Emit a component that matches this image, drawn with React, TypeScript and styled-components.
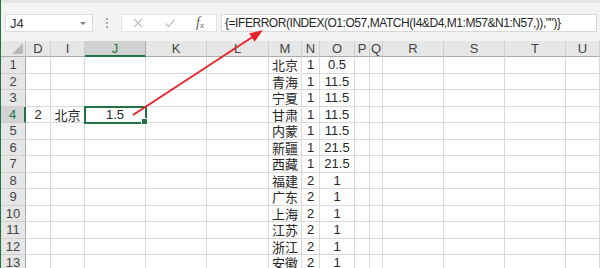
import * as React from "react"
import styled, { createGlobalStyle } from "styled-components"

const GlobalStyle = createGlobalStyle`
  html, body {
    margin: 0;
    padding: 0;
    background: #ffffff;
  }
  body {
    font-family: "Liberation Sans", "Noto Sans CJK SC", sans-serif;
  }
`

const GREEN = "#217346"
const COLUMNS = ["D", "I", "J", "K", "L", "M", "N", "O", "P", "Q", "R", "S", "T", "U"]

type Row = { no: number; cells: Record<string, string> }

const regions: [string, string, string][] = [
  ["北京", "1", "0.5"],
  ["青海", "1", "11.5"],
  ["宁夏", "1", "11.5"],
  ["甘肃", "1", "11.5"],
  ["内蒙", "1", "11.5"],
  ["新疆", "1", "21.5"],
  ["西藏", "1", "21.5"],
  ["福建", "2", "1"],
  ["广东", "2", "1"],
  ["上海", "2", "1"],
  ["江苏", "2", "1"],
  ["浙江", "2", "1"],
  ["安徽", "2", "1"],
]

const rows: Row[] = regions.map(([m, n, o], i) => ({
  no: i + 1,
  cells: i === 3 ? { D: "2", I: "北京", J: "1.5", M: m, N: n, O: o } : { M: m, N: n, O: o },
}))

const ACTIVE_COL = "J"
const ACTIVE_ROW = 4

export default function App() {
  return (
    <Page>
      <GlobalStyle />
      <FormulaBar>
        <NameBox>
          <span>J4</span>
          <Caret />
        </NameBox>
        <Grip>
          <i />
          <i />
          <i />
        </Grip>
        <ActionBox>
          <ActionIcon viewBox="0 0 12 12">
            <path d="M2 2 L10 10 M10 2 L2 10" />
          </ActionIcon>
          <ActionIcon viewBox="0 0 12 12">
            <path d="M1.5 6.5 L4.5 9.5 L10.5 2.5" />
          </ActionIcon>
          <Fx>
            f<sub>x</sub>
          </Fx>
        </ActionBox>
        <FormulaInput>{'{=IFERROR(INDEX(O1:O57,MATCH(I4&D4,M1:M57&N1:N57,)),"")}'}</FormulaInput>
      </FormulaBar>

      <Sheet>
        <Corner>
          <CornerMark />
        </Corner>
        {COLUMNS.map((c) => (
          <ColHeader key={c} $active={c === ACTIVE_COL}>
            {c}
          </ColHeader>
        ))}
        {rows.map((r) => (
          <React.Fragment key={r.no}>
            <RowHeader $active={r.no === ACTIVE_ROW}>{r.no}</RowHeader>
            {COLUMNS.map((c) => (
              <Cell key={c} $active={r.no === ACTIVE_ROW && c === ACTIVE_COL}>
                {r.cells[c] ?? ""}
              </Cell>
            ))}
          </React.Fragment>
        ))}
      </Sheet>

      <Arrow width="600" height="268" viewBox="0 0 600 268">
        <line x1="133" y1="115" x2="254" y2="36" />
        <polygon points="263,30 254.6,41.8 249.2,33.4" />
      </Arrow>
    </Page>
  )
}

const Page = styled.div`
  position: relative;
  width: 600px;
  height: 268px;
  overflow: hidden;
  border-left: 1px solid ${GREEN};
  box-sizing: border-box;
  background: #ffffff;
`

const FormulaBar = styled.div`
  height: 41px;
  box-sizing: border-box;
  padding: 11px 3px 9px 4px;
  border-top: 3px solid #e6e6e6;
  background: #f3f3f3;
  display: flex;
  align-items: stretch;
`

const NameBox = styled.div`
  width: 88px;
  box-sizing: border-box;
  background: #ffffff;
  border: 1px solid #dcdcdc;
  display: flex;
  align-items: center;
  justify-content: space-between;
  padding: 0 6px 0 4px;
  font-size: 13px;
  color: #333333;
`

const Caret = styled.span`
  width: 0;
  height: 0;
  border-left: 3px solid transparent;
  border-right: 3px solid transparent;
  border-top: 3px solid #808080;
`

const Grip = styled.div`
  width: 28px;
  display: flex;
  flex-direction: column;
  align-items: center;
  justify-content: center;
  gap: 2px;

  i {
    width: 2px;
    height: 2px;
    background: #a8a8a8;
  }
`

const ActionBox = styled.div`
  width: 96px;
  box-sizing: border-box;
  background: #ffffff;
  border: 1px solid #e4e4e4;
  display: flex;
  align-items: center;
  padding: 0 9px 0 10px;
  gap: 20px;
`

const ActionIcon = styled.svg`
  width: 12px;
  height: 12px;
  fill: none;
  stroke: #c2c2c2;
  stroke-width: 1.2;
`

const Fx = styled.span`
  font-family: "Liberation Serif", serif;
  font-style: italic;
  font-size: 14px;
  color: #606060;
  line-height: 1;

  sub {
    font-size: 9px;
    vertical-align: -1px;
  }
`

const FormulaInput = styled.div`
  flex: 1;
  margin-left: 4px;
  background: #ffffff;
  border: 1px solid #d8d8d8;
  display: flex;
  align-items: center;
  padding-left: 3px;
  font-size: 12px;
  letter-spacing: -0.45px;
  color: #262626;
  white-space: nowrap;
  overflow: hidden;
`

const Sheet = styled.div`
  display: grid;
  grid-template-columns: 25px 25px 34px 61px 61px 62px 33px 18px 35px 15px 13px 61px 61px 61px 1fr;
  grid-template-rows: 16px repeat(13, 16.5px);
  font-size: 13px;
  color: #262626;
`

const Corner = styled.div`
  position: relative;
  background: #e6e6e6;
  border-right: 1px solid #c6c6c6;
  border-bottom: 1px solid #ababab;
`

const CornerMark = styled.span`
  position: absolute;
  right: 2px;
  bottom: 2px;
  width: 0;
  height: 0;
  border-left: 11px solid transparent;
  border-bottom: 11px solid #b8b8b8;
`

const ColHeader = styled.div<{ $active?: boolean }>`
  box-sizing: border-box;
  display: flex;
  align-items: center;
  justify-content: center;
  background: ${(p) => (p.$active ? "#d2d2d2" : "#e6e6e6")};
  color: ${(p) => (p.$active ? GREEN : "#444444")};
  border-right: 1px solid ${(p) => (p.$active ? "#ababab" : "#cfcfcf")};
  border-bottom: ${(p) => (p.$active ? `2px solid ${GREEN}` : "1px solid #ababab")};
  padding-top: ${(p) => (p.$active ? "1px" : "0")};
`

const RowHeader = styled.div<{ $active?: boolean }>`
  box-sizing: border-box;
  display: flex;
  align-items: center;
  justify-content: center;
  background: ${(p) => (p.$active ? "#d2d2d2" : "#e6e6e6")};
  color: ${(p) => (p.$active ? GREEN : "#444444")};
  border-right: ${(p) => (p.$active ? `2px solid ${GREEN}` : "1px solid #ababab")};
  border-bottom: 1px solid #d0d0d0;
`

const Cell = styled.div<{ $active?: boolean }>`
  position: relative;
  box-sizing: border-box;
  display: flex;
  align-items: center;
  justify-content: center;
  white-space: nowrap;
  border-right: 1px solid #d9d9d9;
  border-bottom: 1px solid #d9d9d9;
  outline: ${(p) => (p.$active ? `2px solid ${GREEN}` : "none")};
  outline-offset: -1px;
  z-index: ${(p) => (p.$active ? 1 : 0)};

  &::after {
    content: "";
    display: ${(p) => (p.$active ? "block" : "none")};
    position: absolute;
    right: -3px;
    bottom: -3px;
    width: 5px;
    height: 5px;
    background: ${GREEN};
    border: 1px solid #ffffff;
  }
`

const Arrow = styled.svg`
  position: absolute;
  left: -1px;
  top: 0;
  pointer-events: none;
  z-index: 5;

  line {
    stroke: #e8242c;
    stroke-width: 2;
  }
  polygon {
    fill: #e8242c;
  }
`
